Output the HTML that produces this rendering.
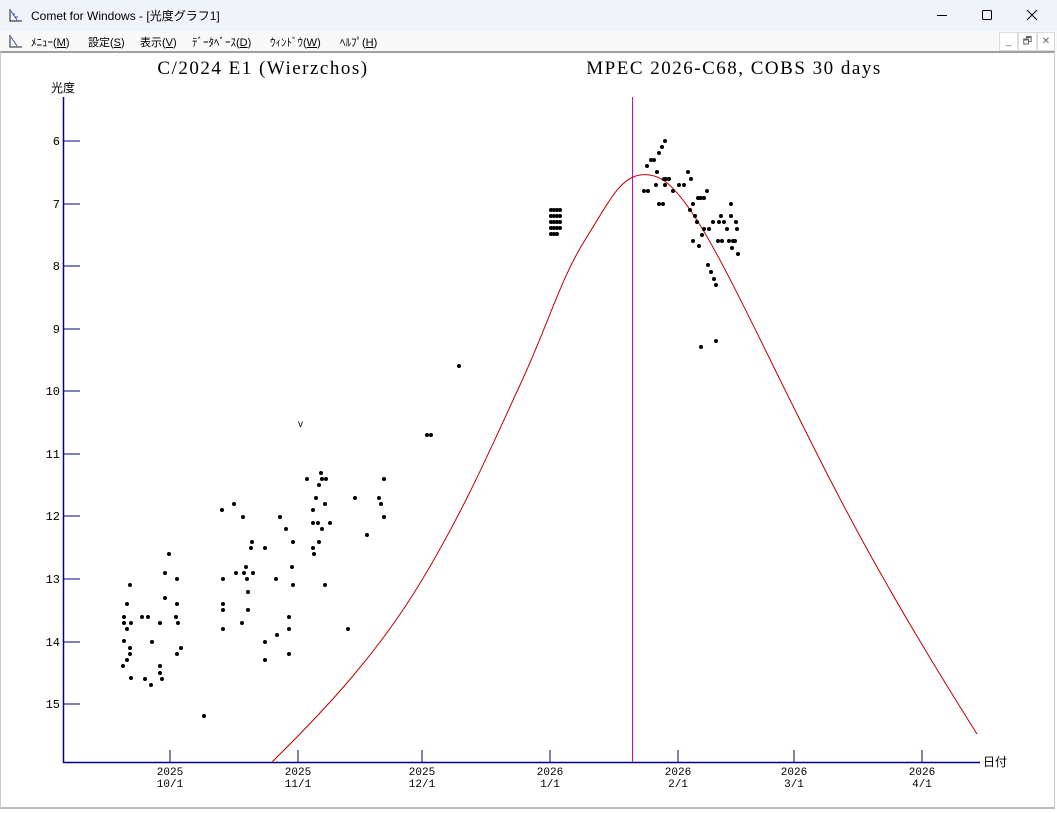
<!DOCTYPE html>
<html><head><meta charset="utf-8">
<style>
html,body{margin:0;padding:0;width:1057px;height:813px;overflow:hidden;background:#fff;font-family:"Liberation Sans","Noto Sans CJK JP",sans-serif}
.tb{position:absolute;left:0;top:0;width:1057px;height:31px;background:#eff4f9}
.tb .t{position:absolute;left:31px;top:7px;font-size:12px;color:#000}
.mb{position:absolute;left:0;top:31px;width:1057px;height:20px;background:#f9f9f9;font-size:11px}
.mb span{position:absolute;top:3px}
.cl{position:absolute;left:0;top:51px;width:1055px;height:758px;border-top:2px solid #a0a0a0;border-left:1px solid #ccc;border-right:1px solid #ccc;border-bottom:2px solid #bbb;box-sizing:border-box;background:#fff}
.btn{position:absolute;top:32px;width:17px;height:17px;border:1px solid #ddd;background:#fff;font-size:10px;text-align:center;color:#666;line-height:17px}
</style></head><body>
<div class="tb">
<svg style="position:absolute;left:9px;top:8px" width="14" height="14"><path d="M1 1V13H13" stroke="#222" fill="none"/><path d="M2 3L8 12M4 6h2M6 9h3" stroke="#3050c0" fill="none"/><path d="M1 13H13" stroke="#000" stroke-dasharray="1 1"/></svg>
<span class="t">Comet for Windows - [光度グラフ1]</span>
<svg style="position:absolute;left:934px;top:8px" width="110" height="14"><path d="M3 7.5H13" stroke="#000"/><rect x="48.5" y="2.5" width="9" height="9" fill="none" stroke="#000" rx="1"/><path d="M93 2L103 12M103 2L93 12" stroke="#000"/></svg>
</div>
<div class="mb">
<svg style="position:absolute;left:9px;top:3px" width="14" height="14"><path d="M1 1V13H13" stroke="#222" fill="none"/><path d="M2 3L8 12" stroke="#3050c0" fill="none"/></svg>
<span style="left:31px">ﾒﾆｭｰ(<u>M</u>)</span>
<span style="left:88px">設定(<u>S</u>)</span>
<span style="left:140px">表示(<u>V</u>)</span>
<span style="left:192px">ﾃﾞｰﾀﾍﾞｰｽ(<u>D</u>)</span>
<span style="left:270px">ｳｨﾝﾄﾞｳ(<u>W</u>)</span>
<span style="left:340px">ﾍﾙﾌﾟ(<u>H</u>)</span>
</div>
<div class="btn" style="left:999px">_</div><div class="btn" style="left:1018px">&#x1F5D7;</div><div class="btn" style="left:1037px;width:16px">✕</div>
<div class="cl"></div>
<svg style="position:absolute;left:0;top:0" width="1057" height="813">
<g font-family="Liberation Serif,serif" font-size="19" text-anchor="middle" fill="#000" letter-spacing="1.5">
<text x="263" y="74">C/2024 E1 (Wierzchos)</text>
<text x="734" y="74">MPEC 2026-C68, COBS 30 days</text>
</g>
<text x="51" y="92" font-size="12" font-family="Noto Sans CJK JP,sans-serif">光度</text>
<text x="983" y="766" font-size="12" font-family="Noto Sans CJK JP,sans-serif">日付</text>
<g stroke="#000080" stroke-width="1.5" fill="none">
<path d="M63.5 97V762.5H980"/>
</g>
<g stroke="#000080" stroke-width="1">
<path d="M63 141H80M63 204H80M63 266H80M63 329H80M63 391H80M63 454H80M63 516H80M63 579H80M63 642H80M63 704H80"/>
<path d="M170 750V762M298 750V762M422 750V762M550 750V762M678 750V762M794 750V762M922 750V762"/>
</g>
<g font-family="Liberation Mono,monospace" font-size="12" text-anchor="end">
<text x="60" y="145">6</text><text x="60" y="208">7</text><text x="60" y="270">8</text><text x="60" y="333">9</text><text x="60" y="395">10</text><text x="60" y="458">11</text><text x="60" y="520">12</text><text x="60" y="583">13</text><text x="60" y="646">14</text><text x="60" y="708">15</text>
</g>
<g font-family="Liberation Mono,monospace" font-size="11" text-anchor="middle">
<text x="170" y="775">2025</text><text x="170" y="787">10/1</text>
<text x="298" y="775">2025</text><text x="298" y="787">11/1</text>
<text x="422" y="775">2025</text><text x="422" y="787">12/1</text>
<text x="550" y="775">2026</text><text x="550" y="787">1/1</text>
<text x="678" y="775">2026</text><text x="678" y="787">2/1</text>
<text x="794" y="775">2026</text><text x="794" y="787">3/1</text>
<text x="922" y="775">2026</text><text x="922" y="787">4/1</text>
</g>
<line x1="632.5" y1="97" x2="632.5" y2="762" stroke="#d000d0"/>
<path d="M272 762C330 705 380 650 422 580S490 450 520 385S560 280 585 240S620 178 640 175S675 185 700 225S760 340 800 420S880 580 977 734" stroke="#c00000" fill="none"/>
<text x="298" y="427" font-size="10" font-family="Liberation Sans,sans-serif">v</text>
<g fill="#000" id="d"></g>
</svg>
<script>
var p=[[124,617],[124,623],[127,604],[130,585],[124,641],[127,660],[130,648],[130,654],[131,678],[123,666],[127,629],[131,623],[142,617],[148,617],[145,679],[151,685],[152,642],[160,623],[160,666],[160,673],[162,679],[165,598],[165,573],[169,554],[176,617],[177,604],[177,579],[178,623],[177,654],[181,648],[204,716],
[222,510],[223,579],[223,604],[223,610],[223,629],[234,504],[236,573],[242,623],[243,517],[244,573],[246,567],[247,579],[248,592],[248,610],[251,548],[252,542],[253,573],[265,548],[265,642],[265,660],[276,579],[277,635],[280,517],[286,529],[289,617],[289,629],[289,654],[292,567],[293,585],[293,542],
[307,479],[313,510],[313,523],[313,548],[314,554],[316,498],[318,523],[319,485],[319,542],[321,473],[322,479],[322,529],[325,504],[325,585],[326,479],[330,523],[348,629],[355,498],[367,535],[379,498],[381,504],[384,517],[384,479],[427,435],[431,435],[459,366],
[644,191],[647,166],[648,191],[651,160],[654,160],[656,185],[657,172],[659,204],[659,153],[662,147],[665,141],[663,204],[664,179],[665,185],[666,179],[669,179],[673,191],[679,185],[684,185],[688,172],[690,210],[691,179],[693,204],[693,241],[695,216],[697,222],[698,198],[699,246],[700,198],[701,198],[702,235],[704,198],[704,229],[707,191],[708,265],[709,229],[711,272],[713,222],[714,279],[716,285],[716,341],[718,241],[719,222],[721,216],[722,241],[724,222],[727,229],[729,241],[731,204],[731,216],[732,248],[733,241],[735,241],[736,222],[737,229],[738,254],[701,347]];
var ys=[210,216,222,228,234];[551,554,557,560].forEach(function(x){ys.forEach(function(y){if(!(x==560&&y==234))p.push([x,y])})});
var s='';p.forEach(function(a){s+='<circle cx="'+a[0]+'" cy="'+a[1]+'" r="2"/>'});
document.getElementById('d').innerHTML=s;
</script>
</body></html>
